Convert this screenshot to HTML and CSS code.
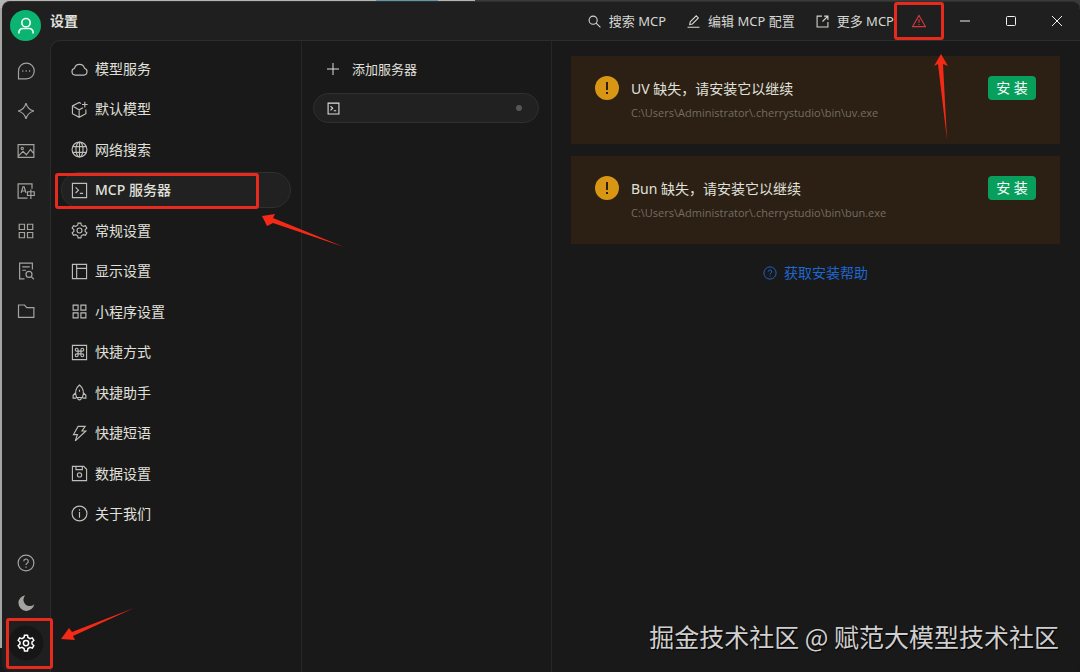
FILE: index.html
```html
<!DOCTYPE html>
<html lang="zh-CN">
<head>
    <meta charset="UTF-8">
    <meta name="viewport" content="width=device-width, initial-scale=1.0">
    <title>设置</title>
    <link rel="stylesheet" href="styles.css">
</head>
<body>
    <!-- shared icons -->
    <svg class="sprite" aria-hidden="true">
        <symbol id="i-grid" viewBox="0 0 24 24"><path d="M3 3h7v7H3zM14 3h7v7h-7zM3 14h7v7H3zM14 14h7v7h-7z"/></symbol>
        <symbol id="i-terminal" viewBox="0 0 24 24"><path d="M2 2h20v20H2zM6.500 7.500l4 4-4 4M12.500 16H17"/></symbol>
        <symbol id="i-gear" viewBox="0 0 24 24"><path d="M9.400 4.600L10 1.500h4l.6 3.100 2.800 1.600 3-1 2 3.400-2.400 2.100v2.600l2.400 2.100-2 3.400-3-1-2.800 1.600-.6 3.100h-4l-.6-3.100-2.800-1.600-3 1-2-3.400L4 13.300v-2.600L1.600 8.600l2-3.400 3 1z"/><circle cx="12" cy="12" r="3.500"/></symbol>
        <symbol id="i-help" viewBox="0 0 24 24"><circle cx="12" cy="12" r="10.500"/><path d="M9 9.800a3 3 0 1 1 4.500 2.500c-1 .6-1.500 1.100-1.500 2.200M12 16.600v1.600"/></symbol>
    </svg>

    <div class="window">
        <nav class="rail" aria-label="主导航">
            <button class="avatar" type="button" aria-label="用户">
                <svg viewBox="0 0 24 24"><circle cx="12" cy="8" r="5"/><path d="M3.500 21v-1.500a4.500 4.500 0 0 1 4.500-4.500h8a4.500 4.500 0 0 1 4.500 4.500V21"/></svg>
            </button>
            <button class="rail-btn" type="button" aria-label="聊天">
                <svg viewBox="0 0 24 24"><path d="M2 22.500V12a10.500 10.500 0 1 1 10.500 10.500z"/><path class="thick" d="M7 12h1.500M11.500 12H13M16 12h1.500"/></svg>
            </button>
            <button class="rail-btn" type="button" aria-label="智能体">
                <svg viewBox="0 0 24 24"><path d="M12 1.500c1.500 6 4.500 9 10.500 10.500-6 1.500-9 4.500-10.500 10.500C10.500 16.500 7.500 13.500 1.500 12 7.500 10.500 10.500 7.500 12 1.500z"/></svg>
            </button>
            <button class="rail-btn" type="button" aria-label="绘画">
                <svg viewBox="0 0 24 24"><path d="M1.500 3.500h21v17h-21zM2 18.500l6-6 4.500 4.500 5.500-7 4.500 5.500"/><circle cx="7" cy="8.500" r="1.500"/></svg>
            </button>
            <button class="rail-btn" type="button" aria-label="翻译">
                <svg viewBox="0 0 24 24"><path d="M20 9V2.500H1.500v19H14M5.500 14.500l2.500-8h1.500l2.500 8M6.500 12h4.500M14 13h9v5h-9zM18.500 10v12.500"/></svg>
            </button>
            <button class="rail-btn" type="button" aria-label="小程序">
                <svg><use href="#i-grid"/></svg>
            </button>
            <button class="rail-btn" type="button" aria-label="知识库">
                <svg viewBox="0 0 24 24"><path d="M20.500 10V1.500h-17v21H10M7 6.500h10M7 11h5"/><circle cx="16" cy="16.500" r="4"/><path d="M19 19.500l3.500 3.500"/></svg>
            </button>
            <button class="rail-btn" type="button" aria-label="文件">
                <svg viewBox="0 0 24 24"><path d="M2 4h8l3 3.500h9.500v13H2z"/></svg>
            </button>

            <button class="rail-btn rail-bottom" type="button" aria-label="帮助">
                <svg><use href="#i-help"/></svg>
            </button>
            <button class="rail-btn" type="button" aria-label="主题">
                <svg viewBox="0 0 24 24"><path class="solid" d="M11 1.500A10.600 10.600 0 1 0 23 13.500 8 8 0 1 1 11 1.500z"/></svg>
            </button>
            <button class="rail-btn active" type="button" aria-label="设置">
                <svg><use href="#i-gear"/></svg>
                <span class="mark mark-rail"></span>
                <svg class="arrow arrow-rail" viewBox="0 0 74 34"><path d="M1 32L9 21l3 4L74 1 13 29l2 4z"/></svg>
            </button>
        </nav>

        <div class="main">
            <header class="titlebar">
                <h1>设置</h1>
                <div class="tools">
                    <button type="button">
                        <svg viewBox="0 0 24 24"><circle cx="9.500" cy="9.500" r="7.500"/><path d="M15 15l8 8"/></svg>
                        搜索 MCP
                    </button>
                    <button type="button">
                        <svg viewBox="0 0 24 24"><path d="M5 17.500l1-5L17 1.500l4 4-11 11zM1 22.500h22"/></svg>
                        编辑 MCP 配置
                    </button>
                    <button type="button">
                        <svg viewBox="0 0 24 24"><path d="M11 2H2v20h20v-9M15 2h7v7M22 2L12 12"/></svg>
                        更多 MCP
                    </button>
                </div>
                <div class="controls">
                    <button class="warn" type="button" aria-label="警告">
                        <svg class="warn-icon" viewBox="0 0 24 24"><path d="M12 2.500L23 21.500H1zM12 9v6M12 17v2"/></svg>
                        <span class="mark mark-top"></span>
                        <svg class="arrow arrow-top" viewBox="0 0 16 88"><path d="M8 1l7 12-5-2 4 76L5 11l-4 2z"/></svg>
                    </button>
                    <button type="button" aria-label="最小化">
                        <svg viewBox="0 0 12 12"><path d="M1 6h10"/></svg>
                    </button>
                    <button type="button" aria-label="最大化">
                        <svg viewBox="0 0 12 12"><rect x="1.500" y="1.500" width="9" height="9" rx="1"/></svg>
                    </button>
                    <button type="button" aria-label="关闭">
                        <svg viewBox="0 0 12 12"><path d="M1 1l10 10M11 1L1 11"/></svg>
                    </button>
                </div>
            </header>

            <div class="content">
                <ul class="menu">
                    <li><a href="#">
                        <svg viewBox="0 0 24 24"><path d="M6 20a5 5 0 0 1-1-9.800 7.200 7.200 0 0 1 14 0A5 5 0 0 1 18 20z"/></svg>
                        模型服务</a></li>
                    <li><a href="#">
                        <svg viewBox="0 0 24 24"><path d="M14 3.500L11.500 2 2 7v11l9.500 5 9.500-5v-6M2 7l9.500 5.500L17 9.500M11.500 12.500V23M19.500 1v8M15.500 5h8"/></svg>
                        默认模型</a></li>
                    <li><a href="#">
                        <svg viewBox="0 0 24 24"><circle cx="12" cy="12" r="10.500"/><ellipse cx="12" cy="12" rx="5" ry="10.500"/><path d="M12 1.500v21M2.500 8h19M2.500 16h19"/></svg>
                        网络搜索</a></li>
                    <li><a href="#" class="selected">
                        <svg><use href="#i-terminal"/></svg>
                        MCP 服务器
                        <span class="mark mark-menu"></span></a>
                        <svg class="arrow arrow-menu" viewBox="0 0 84 36"><path d="M1 3l13-2-2 4 71 29L12 10l-6 3z"/></svg></li>
                    <li><a href="#">
                        <svg><use href="#i-gear"/></svg>
                        常规设置</a></li>
                    <li><a href="#">
                        <svg viewBox="0 0 24 24"><path d="M2 2h20v20H2zM8 2v20M8 7.500h14"/></svg>
                        显示设置</a></li>
                    <li><a href="#">
                        <svg><use href="#i-grid"/></svg>
                        小程序设置</a></li>
                    <li><a href="#">
                        <svg viewBox="0 0 24 24"><path d="M2 2h20v20H2zM10 10V8a2 2 0 1 0-2 2h8a2 2 0 1 0-2-2v8a2 2 0 1 0 2-2H8a2 2 0 1 0 2 2z"/></svg>
                        快捷方式</a></li>
                    <li><a href="#">
                        <svg viewBox="0 0 24 24"><path d="M8 19c-3-7-1.500-13 4-17.500C17.500 6 19 12 16 19zM7 12l-4 4v4h4.500M17 12l4 4v4h-4.500M9.500 19.500c0 2 1 3 2.500 3s2.500-1 2.500-3M12 8v3"/></svg>
                        快捷助手</a></li>
                    <li><a href="#">
                        <svg viewBox="0 0 24 24"><path d="M10 2h10l-4.500 6.500H21L6 22.500l3-9H3.500z"/></svg>
                        快捷短语</a></li>
                    <li><a href="#">
                        <svg viewBox="0 0 24 24"><path d="M2 2h16l4 4v16H2zM7 2v4.500h9V2"/><circle cx="12" cy="14" r="3"/></svg>
                        数据设置</a></li>
                    <li><a href="#">
                        <svg viewBox="0 0 24 24"><circle cx="12" cy="12" r="10.500"/><path d="M12 10v8M12 6v2"/></svg>
                        关于我们</a></li>
                </ul>

                <section class="servers">
                    <button class="add" type="button">
                        <svg viewBox="0 0 12 12"><path d="M6 0v12M0 6h12"/></svg>
                        添加服务器
                    </button>
                    <button class="server" type="button" aria-label="服务器">
                        <svg><use href="#i-terminal"/></svg>
                        <span class="dot"></span>
                    </button>
                </section>

                <section class="detail">
                    <div class="alert">
                        <svg class="alert-icon" viewBox="0 0 24 24"><circle cx="12" cy="12" r="12"/><path d="M12 6v8M12 16v2"/></svg>
                        <div class="alert-text">
                            <h2>UV 缺失，请安装它以继续</h2>
                            <p>C:\Users\Administrator\.cherrystudio\bin\uv.exe</p>
                        </div>
                        <button class="install" type="button">安 装</button>
                    </div>
                    <div class="alert">
                        <svg class="alert-icon" viewBox="0 0 24 24"><circle cx="12" cy="12" r="12"/><path d="M12 6v8M12 16v2"/></svg>
                        <div class="alert-text">
                            <h2>Bun 缺失，请安装它以继续</h2>
                            <p>C:\Users\Administrator\.cherrystudio\bin\bun.exe</p>
                        </div>
                        <button class="install" type="button">安 装</button>
                    </div>
                    <a class="help" href="#">
                        <svg><use href="#i-help"/></svg>
                        获取安装帮助
                    </a>
                </section>
            </div>
        </div>
        <p class="watermark">掘金技术社区 @ 赋范大模型技术社区</p>
    </div>
</body>
</html>
```

FILE: styles.css
```css
* {
    box-sizing: border-box;
}

body {
    margin: 0;
    padding: 1px 0 0 2px;
    min-height: 100vh;
    display: flex;
    color: #e0e0dc;
    font-family: "Noto Sans", "Noto Sans CJK SC", sans-serif;
    font-size: 14px;
    line-height: 20px;
    /* strips of the desktop behind the window */
    background:
        linear-gradient(90deg, #b4b6b4 376px, #5b9aa6 376px, #5b9aa6 438px, #b4b6b4 438px, #b4b6b4 475px, #3a3a3a 475px) 0 0 / 100% 8px no-repeat,
        linear-gradient(#a4a6a4 0, #a4a6a4 648px, #15191c 648px);
}

button {
    margin: 0;
    padding: 0;
    border: 0;
    background: none;
    color: inherit;
    font: inherit;
    cursor: pointer;
}

a {
    color: inherit;
    text-decoration: none;
}

h1, h2, p, ul {
    margin: 0;
    padding: 0;
}

svg {
    display: block;
    flex: none;
    fill: none;
    stroke: currentColor;
    stroke-width: 1.6;
}

.sprite {
    position: absolute;
    width: 0;
    height: 0;
}

.window {
    position: relative;
    flex: 1;
    display: flex;
    background-color: #1f1f1f;
    border-top: 1px solid #303030;
    border-radius: 8px;
    overflow: hidden;
}

/* left icon rail */
.rail {
    width: 48px;
    padding: 8px 1px 9px 0;
    display: flex;
    flex-direction: column;
    align-items: center;
}

.avatar {
    width: 31px;
    height: 31px;
    margin-bottom: 10px;
    display: flex;
    align-items: center;
    justify-content: center;
    border-radius: 50%;
    background-color: #0bb471;
    color: #effff4;
}

.avatar svg {
    width: 20px;
    height: 20px;
    stroke-width: 2;
}

.rail-btn {
    position: relative;
    width: 40px;
    height: 40px;
    display: flex;
    align-items: center;
    justify-content: center;
    color: #a3a3a1;
}

.rail-btn svg {
    width: 18px;
    height: 18px;
}

.rail-btn .thick {
    stroke-width: 2;
}

.rail-btn .solid {
    fill: currentColor;
    stroke: none;
}

.rail-bottom {
    margin-top: auto;
}

.rail-btn.active {
    color: #fff;
    background: radial-gradient(circle, #161616 17px, transparent 18px);
}

.rail-btn.active svg {
    stroke-width: 2;
}

/* top bar */
.main {
    flex: 1;
    min-width: 0;
    display: flex;
    flex-direction: column;
}

.titlebar {
    height: 38px;
    display: flex;
    align-items: center;
}

.titlebar h1 {
    flex: 1;
    font-size: 14px;
    font-weight: 700;
    line-height: 20px;
}

.tools {
    display: flex;
    gap: 21px;
    margin-right: 2px;
    font-size: 13px;
    color: #d6d6d2;
}

.tools button {
    display: flex;
    align-items: center;
    gap: 8px;
    white-space: nowrap;
}

.tools svg {
    width: 13px;
    height: 13px;
    stroke-width: 2;
}

.controls {
    display: flex;
}

.controls button {
    position: relative;
    width: 46px;
    height: 38px;
    display: flex;
    align-items: center;
    justify-content: center;
    color: #f0f0f0;
}

.controls svg {
    width: 12px;
    height: 12px;
    stroke-width: 1;
}

.controls .warn {
    color: #d8363e;
}

.controls .warn-icon {
    width: 14px;
    height: 14px;
    stroke-width: 2;
}

/* three columns */
.content {
    flex: 1;
    display: flex;
    background-color: #191919;
    border-top: 1px solid #2c2c2c;
    border-left: 1px solid #2c2c2c;
    border-top-left-radius: 10px;
}

.menu {
    width: 250px;
    height: 501px;
    padding: 10px;
    flex: none;
    display: flex;
    flex-direction: column;
    justify-content: space-between;
    list-style: none;
}

.menu li {
    position: relative;
}

.menu a {
    position: relative;
    height: 36px;
    padding: 0 9px;
    display: flex;
    align-items: center;
    gap: 7px;
    border: 1px solid transparent;
    border-radius: 18px;
}

.menu a svg {
    width: 17px;
    height: 17px;
    color: #bdbdba;
}

.menu .selected {
    font-weight: 500;
    background-color: #212121;
    border-color: #303030;
}

.servers {
    width: 250px;
    padding: 10px 12px 10px 11px;
    flex: none;
    border-left: 1px solid #262626;
    font-size: 13px;
}

.add {
    width: 100%;
    height: 36px;
    padding: 0 14px;
    display: flex;
    align-items: center;
    gap: 13px;
}

.add svg {
    width: 12px;
    height: 12px;
    stroke-width: 1;
}

.server {
    width: 100%;
    height: 30px;
    margin-top: 6px;
    padding: 0 16px 0 13px;
    display: flex;
    align-items: center;
    justify-content: space-between;
    background-color: #212121;
    border: 1px solid #303030;
    border-radius: 15px;
}

.server svg {
    width: 13px;
    height: 13px;
    stroke-width: 2;
}

.dot {
    width: 6px;
    height: 6px;
    border-radius: 50%;
    background-color: #565656;
}

.detail {
    flex: 1;
    min-width: 0;
    padding: 15px 20px 15px 19px;
    display: flex;
    flex-direction: column;
    gap: 12px;
    border-left: 1px solid #262626;
}

.alert {
    height: 88px;
    padding: 20px 24px;
    display: flex;
    align-items: flex-start;
    gap: 12px;
    background-color: #2b2013;
}

.alert-icon {
    width: 24px;
    height: 24px;
    stroke: #2b2013;
    stroke-width: 2;
}

.alert-icon circle {
    fill: #d89614;
    stroke: none;
}

.alert-text {
    flex: 1;
    min-width: 0;
}

.alert h2 {
    font-size: 14px;
    font-weight: 400;
    line-height: 25px;
}

.alert p {
    font-size: 11px;
    line-height: 24px;
    color: #756d62;
    font-family: "Open Sans", sans-serif;
}

.install {
    width: 48px;
    height: 24px;
    border-radius: 4px;
    background-color: #089e5b;
    color: #fff;
    line-height: 24px;
}

.help {
    align-self: center;
    height: 34px;
    display: flex;
    align-items: center;
    gap: 7px;
    color: #1f66d0;
}

.help svg {
    width: 14px;
    height: 14px;
}

.watermark {
    position: absolute;
    right: 21px;
    bottom: 18px;
    font-size: 25px;
    line-height: 36px;
    color: #cfcfcf;
    text-shadow: 1px 1px 1px #000;
    font-family: "Noto Sans CJK SC", sans-serif;
}

/* red callouts */
.mark {
    position: absolute;
    z-index: 2;
    border: 3px solid #e62a1e;
    border-radius: 3px;
    pointer-events: none;
}

.mark-rail {
    inset: -5px -7px -6px 0;
}

.mark-menu {
    inset: 0 31px -2px -7px;
}

.mark-top {
    inset: 0 -2px 0 -2px;
}

.window .arrow {
    position: absolute;
    z-index: 2;
    fill: #f52a16;
    stroke: none;
    pointer-events: none;
}

.rail-btn .arrow-rail {
    left: 54px;
    top: -16px;
    width: 74px;
    height: 34px;
}

.menu .arrow-menu {
    left: 200px;
    top: 41px;
    width: 84px;
    height: 36px;
}

.controls .arrow-top {
    left: 37px;
    top: 51px;
    width: 16px;
    height: 88px;
}
```
